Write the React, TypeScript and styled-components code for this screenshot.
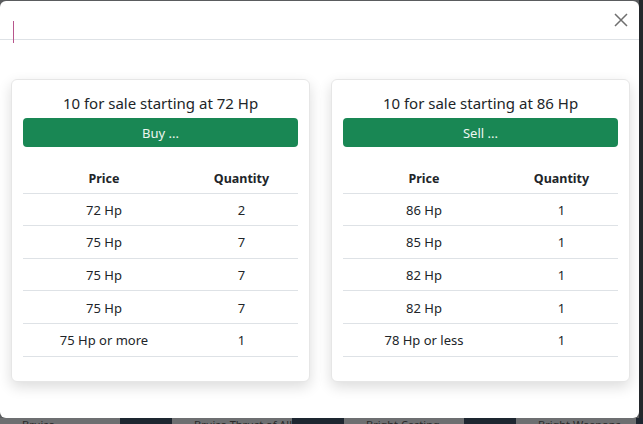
import React from "react";
import styled, { createGlobalStyle } from "styled-components";

const Global = createGlobalStyle`
  html, body { margin: 0; padding: 0; }
  body {
    background: #3f4143;
    font-family: "Segoe UI", "Noto Sans", "Open Sans", sans-serif;
    color: #212529;
  }
`;

const Page = styled.div`
  width: 643px;
  height: 424px;
  overflow: hidden;
  display: flex;
  flex-direction: column;
  background: linear-gradient(to right, #5a5c5e 0, #5a5c5e 639px, #23272b 639px);
`;

const Modal = styled.div`
  margin-top: 1px;
  width: 639px;
  height: 417px;
  flex: none;
  background: #fff;
  border-radius: 6px;
  display: flex;
  flex-direction: column;
  overflow: hidden;
`;

const Header = styled.div`
  position: relative;
  height: 38px;
  flex: none;
  border-bottom: 1px solid #dee2e6;
  display: flex;
  align-items: center;
  justify-content: flex-end;
  padding-right: 10px;
`;

const Caret = styled.span`
  position: absolute;
  left: 13px;
  top: 20px;
  width: 1px;
  height: 22px;
  background: #b8558c;
`;

const Close = styled.button`
  border: 0;
  background: transparent;
  padding: 0;
  width: 16px;
  height: 16px;
  display: flex;
  align-items: center;
  justify-content: center;
  margin-top: -1px;
`;

const Body = styled.div`
  display: flex;
  gap: 21px;
  padding: 39px 9px 0 11px;
`;

const Card = styled.div`
  flex: 1;
  height: 303px;
  box-sizing: border-box;
  border: 1px solid #e6e6e6;
  border-radius: 6px;
  background: #fff;
  box-shadow: 0 5px 14px rgba(0, 0, 0, 0.14);
  padding: 11px 11px 0 11px;
  display: flex;
  flex-direction: column;
`;

const Title = styled.div`
  font-size: 15px;
  line-height: 24px;
  text-align: center;
  margin-bottom: 3px;
`;

const ActionButton = styled.button`
  height: 29px;
  border: 0;
  border-radius: 4px;
  background: #198754;
  color: #eef6f1;
  font-family: inherit;
  font-size: 13px;
  padding: 0;
`;

const Table = styled.div`
  margin-top: 14px;
  display: grid;
  grid-template-columns: 162px 1fr;
`;

const Cell = styled.div<{ $head?: boolean }>`
  height: 32.6px;
  box-sizing: border-box;
  border-bottom: 1px solid #dee2e6;
  display: flex;
  align-items: center;
  justify-content: center;
  font-size: ${(p) => (p.$head ? "12.5px" : "13px")};
  font-weight: ${(p) => (p.$head ? 700 : 400)};
  padding-top: ${(p) => (p.$head ? "3px" : "1px")};
`;

const Backdrop = styled.div`
  flex: none;
  height: 6px;
  display: flex;
`;

const BgCell = styled.div<{ $dark?: boolean }>`
  flex: none;
  width: ${(p) => (p.$dark ? "52px" : "120px")};
  background: ${(p) => (p.$dark ? "#1d2630" : "#6d6f71")};
  color: #2a2a2a;
  font-size: 11px;
  line-height: 14px;
  padding-left: 22px;
  box-sizing: border-box;
  white-space: nowrap;
  overflow: hidden;
`;

type Row = [string, string];

const buyRows: Row[] = [
  ["72 Hp", "2"],
  ["75 Hp", "7"],
  ["75 Hp", "7"],
  ["75 Hp", "7"],
  ["75 Hp or more", "1"],
];

const sellRows: Row[] = [
  ["86 Hp", "1"],
  ["85 Hp", "1"],
  ["82 Hp", "1"],
  ["82 Hp", "1"],
  ["78 Hp or less", "1"],
];

function OrderCard({ title, action, rows }: { title: string; action: string; rows: Row[] }) {
  return (
    <Card>
      <Title>{title}</Title>
      <ActionButton>{action}</ActionButton>
      <Table>
        <Cell $head>Price</Cell>
        <Cell $head>Quantity</Cell>
        {rows.map(([p, q], i) => (
          <React.Fragment key={i}>
            <Cell>{p}</Cell>
            <Cell>{q}</Cell>
          </React.Fragment>
        ))}
      </Table>
    </Card>
  );
}

export default function App() {
  return (
    <>
      <Global />
      <Page>
        <Modal>
          <Header>
            <Caret />
            <Close aria-label="Close">
              <svg width="14" height="14" viewBox="0 0 14 14">
                <path d="M1 1 L13 13 M13 1 L1 13" stroke="#6f6f6f" strokeWidth="1.5" fill="none" />
              </svg>
            </Close>
          </Header>
          <Body>
            <OrderCard title="10 for sale starting at 72 Hp" action="Buy ..." rows={buyRows} />
            <OrderCard title="10 for sale starting at 86 Hp" action="Sell ..." rows={sellRows} />
          </Body>
        </Modal>
        <Backdrop>
          <BgCell>Bruise</BgCell>
          <BgCell $dark />
          <BgCell>Bruise Thrust of All</BgCell>
          <BgCell $dark />
          <BgCell>Bright Casting</BgCell>
          <BgCell $dark />
          <BgCell>Bright Weapons</BgCell>
          <BgCell $dark />
        </Backdrop>
      </Page>
    </>
  );
}
